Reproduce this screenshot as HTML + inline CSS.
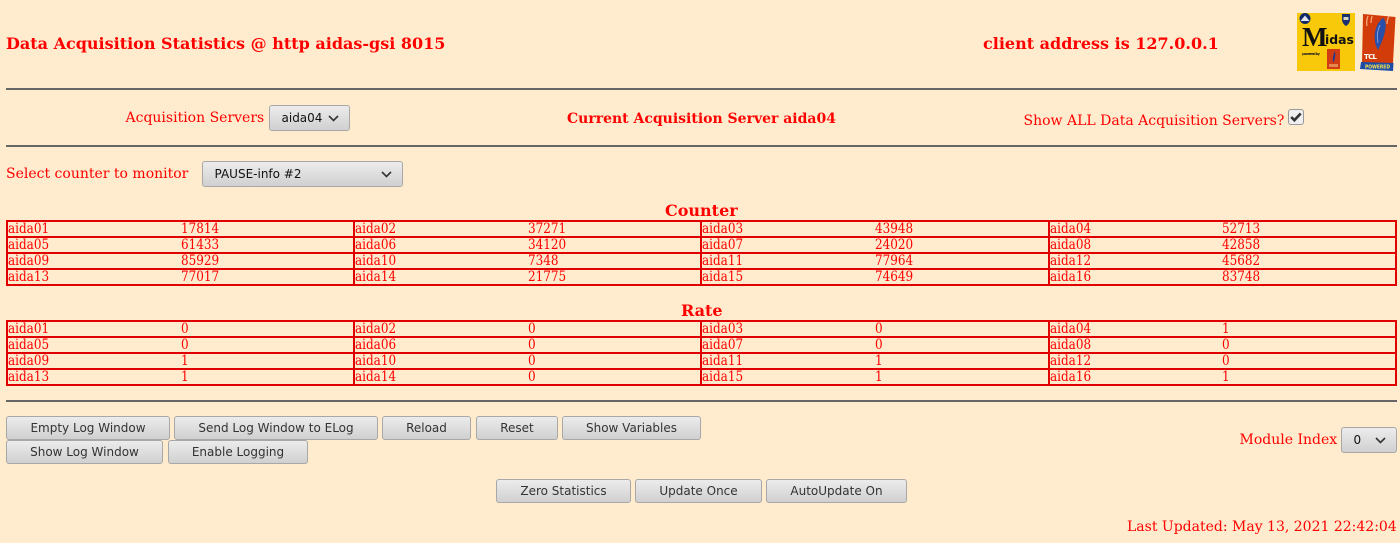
<!DOCTYPE html>
<html><head><meta charset="utf-8">
<style>
html,body{margin:0;padding:0;width:1400px;height:543px;overflow:hidden;background:#ffebcd;}
body{position:relative;font-family:"DejaVu Serif",serif;color:#f00;}
.t{position:absolute;white-space:nowrap;line-height:20px;}
.b{font-weight:bold;}
.hr{position:absolute;left:6px;width:1391px;height:2px;background:#666;}
.btn,.sel{position:absolute;box-sizing:border-box;height:24px;border:1px solid #a8a8a8;border-radius:3px;background:linear-gradient(#ececec,#d0d0d0);font:12px/22px "DejaVu Sans",sans-serif;color:#333;text-align:center;white-space:nowrap;}
.sel{height:26px;line-height:24px;color:#111;text-align:left;padding-left:11.5px;}
.sel svg{position:absolute;top:9px;}
.grid{position:absolute;left:6px;width:1391px;height:66px;}
.ln{position:absolute;background:#e00000;}
.c{position:absolute;font-size:12px;line-height:14px;white-space:nowrap;transform:scaleY(1.13);transform-origin:0 11px;}
</style></head>
<body>
<div class="t b" style="left:6px;top:34px;font-size:16px">Data Acquisition Statistics @ http aidas-gsi 8015</div>
<div class="t b" style="left:983px;top:34px;font-size:16px">client address is 127.0.0.1</div>

<svg style="position:absolute;left:1297px;top:13px;filter:blur(.35px)" width="58" height="58" viewBox="0 0 58 58">
<rect width="58" height="58" fill="#f8c80a"/>
<circle cx="8" cy="5.500" r="5.500" fill="#0f2a66"/><path d="M3.500 8L8 2.500l4.500 5.500z" fill="#dfe6f2"/>
<path d="M45 1h8v6q-.5 4-4 6Q45.500 11 45 7z" fill="#1a2f70"/><rect x="46.500" y="4" width="5" height="3" fill="#d6d6c0"/>
<text x="5" y="33" font-family="Liberation Serif,serif" font-weight="bold" font-size="27" fill="#111">M</text>
<text x="28" y="31" font-family="DejaVu Sans,sans-serif" font-weight="bold" font-size="12.400" fill="#111">idas</text>
<text x="5" y="42" font-family="DejaVu Sans,sans-serif" font-weight="bold" font-size="3.600" fill="#222" textLength="18">powered by</text>
<rect x="30" y="36" width="13" height="20" fill="#d23c12"/><path d="M38 38q1 5-1.500 12q-2-5 1.500-12z" fill="#223a90"/><rect x="32" y="51" width="9" height="3" fill="#e88a50"/>
</svg>
<svg style="position:absolute;left:1360px;top:13px;filter:blur(.35px)" width="37" height="58" viewBox="0 0 37 58">
<path d="M3 1L35.500 4 33 50H2z" fill="#d23c0a"/>
<path d="M1 49L33.500 50 33 58 0 56z" fill="#1a4ca8"/>
<path d="M23 5C28 9 26 21 18 37C12 27 14 12 23 5z" fill="#2a4fa8"/>
<path d="M20 12C17 18 17 25 18 30" stroke="#7aa0e0" stroke-width="1" fill="none"/>
<path d="M8 3q-2 5-1 10M29 3q-2 4-2 8M12 3q-1 4-1 7" stroke="#f5a878" stroke-width="1.300" fill="none"/>
<text x="4" y="46" font-family="DejaVu Sans,sans-serif" font-weight="bold" font-size="7" fill="#fff" textLength="13">TCL</text>
<text x="5" y="55.500" font-family="DejaVu Sans,sans-serif" font-weight="bold" font-size="5.500" fill="#ffe24a" textLength="25" lengthAdjust="spacingAndGlyphs">POWERED</text>
</svg>

<div class="hr" style="top:88px"></div>
<div class="t" style="left:125.500px;top:108px;font-size:14px">Acquisition Servers</div>
<div class="sel" style="left:269px;top:105px;width:81px">aida04<svg style="left:58px" width="11" height="7" viewBox="0 0 11 7"><path d="M1 1l4.500 4.500L10 1" fill="none" stroke="#333" stroke-width="1.600"/></svg></div>
<div class="t b" style="left:567px;top:109px;font-size:14px">Current Acquisition Server aida04</div>
<div class="t" style="left:1023.500px;top:111px;font-size:14px">Show ALL Data Acquisition Servers?</div>
<svg style="position:absolute;left:1288px;top:109px" width="16" height="16" viewBox="0 0 16 16"><rect x=".5" y=".5" width="15" height="15" rx="2.500" fill="#efefef" stroke="#999"/><path d="M3.200 8l3.200 3.200 6.300-6.700" fill="none" stroke="#333" stroke-width="2.600"/></svg>
<div class="hr" style="top:145px"></div>

<div class="t" style="left:6px;top:164px;font-size:14px">Select counter to monitor</div>
<div class="sel" style="left:202px;top:161px;width:201px">PAUSE-info #2<svg style="left:178px" width="11" height="7" viewBox="0 0 11 7"><path d="M1 1l4.500 4.500L10 1" fill="none" stroke="#333" stroke-width="1.600"/></svg></div>

<div class="t b" style="left:665px;top:201px;font-size:16px">Counter</div>
<div class="grid" style="top:220px">
<div class="ln" style="left:0;top:0;width:1391px;height:2px"></div>
<div class="ln" style="left:0;top:16px;width:1391px;height:2px"></div>
<div class="ln" style="left:0;top:32px;width:1391px;height:2px"></div>
<div class="ln" style="left:0;top:48px;width:1391px;height:2px"></div>
<div class="ln" style="left:0;top:64px;width:1391px;height:2px"></div>
<div class="ln" style="left:0;top:0;width:2px;height:66px"></div>
<div class="ln" style="left:347px;top:0;width:2px;height:66px"></div>
<div class="ln" style="left:694px;top:0;width:2px;height:66px"></div>
<div class="ln" style="left:1042px;top:0;width:2px;height:66px"></div>
<div class="ln" style="left:1389px;top:0;width:2px;height:66px"></div>
<div class="c" style="left:2px;top:2px">aida01</div><div class="c" style="left:175px;top:2px">17814</div><div class="c" style="left:349px;top:2px">aida02</div><div class="c" style="left:522px;top:2px">37271</div><div class="c" style="left:696px;top:2px">aida03</div><div class="c" style="left:869px;top:2px">43948</div><div class="c" style="left:1044px;top:2px">aida04</div><div class="c" style="left:1216px;top:2px">52713</div>
<div class="c" style="left:2px;top:18px">aida05</div><div class="c" style="left:175px;top:18px">61433</div><div class="c" style="left:349px;top:18px">aida06</div><div class="c" style="left:522px;top:18px">34120</div><div class="c" style="left:696px;top:18px">aida07</div><div class="c" style="left:869px;top:18px">24020</div><div class="c" style="left:1044px;top:18px">aida08</div><div class="c" style="left:1216px;top:18px">42858</div>
<div class="c" style="left:2px;top:34px">aida09</div><div class="c" style="left:175px;top:34px">85929</div><div class="c" style="left:349px;top:34px">aida10</div><div class="c" style="left:522px;top:34px">7348</div><div class="c" style="left:696px;top:34px">aida11</div><div class="c" style="left:869px;top:34px">77964</div><div class="c" style="left:1044px;top:34px">aida12</div><div class="c" style="left:1216px;top:34px">45682</div>
<div class="c" style="left:2px;top:50px">aida13</div><div class="c" style="left:175px;top:50px">77017</div><div class="c" style="left:349px;top:50px">aida14</div><div class="c" style="left:522px;top:50px">21775</div><div class="c" style="left:696px;top:50px">aida15</div><div class="c" style="left:869px;top:50px">74649</div><div class="c" style="left:1044px;top:50px">aida16</div><div class="c" style="left:1216px;top:50px">83748</div>
</div>

<div class="t b" style="left:681px;top:301px;font-size:16px">Rate</div>
<div class="grid" style="top:320px">
<div class="ln" style="left:0;top:0;width:1391px;height:2px"></div>
<div class="ln" style="left:0;top:16px;width:1391px;height:2px"></div>
<div class="ln" style="left:0;top:32px;width:1391px;height:2px"></div>
<div class="ln" style="left:0;top:48px;width:1391px;height:2px"></div>
<div class="ln" style="left:0;top:64px;width:1391px;height:2px"></div>
<div class="ln" style="left:0;top:0;width:2px;height:66px"></div>
<div class="ln" style="left:347px;top:0;width:2px;height:66px"></div>
<div class="ln" style="left:694px;top:0;width:2px;height:66px"></div>
<div class="ln" style="left:1042px;top:0;width:2px;height:66px"></div>
<div class="ln" style="left:1389px;top:0;width:2px;height:66px"></div>
<div class="c" style="left:2px;top:2px">aida01</div><div class="c" style="left:175px;top:2px">0</div><div class="c" style="left:349px;top:2px">aida02</div><div class="c" style="left:522px;top:2px">0</div><div class="c" style="left:696px;top:2px">aida03</div><div class="c" style="left:869px;top:2px">0</div><div class="c" style="left:1044px;top:2px">aida04</div><div class="c" style="left:1216px;top:2px">1</div>
<div class="c" style="left:2px;top:18px">aida05</div><div class="c" style="left:175px;top:18px">0</div><div class="c" style="left:349px;top:18px">aida06</div><div class="c" style="left:522px;top:18px">0</div><div class="c" style="left:696px;top:18px">aida07</div><div class="c" style="left:869px;top:18px">0</div><div class="c" style="left:1044px;top:18px">aida08</div><div class="c" style="left:1216px;top:18px">0</div>
<div class="c" style="left:2px;top:34px">aida09</div><div class="c" style="left:175px;top:34px">1</div><div class="c" style="left:349px;top:34px">aida10</div><div class="c" style="left:522px;top:34px">0</div><div class="c" style="left:696px;top:34px">aida11</div><div class="c" style="left:869px;top:34px">1</div><div class="c" style="left:1044px;top:34px">aida12</div><div class="c" style="left:1216px;top:34px">0</div>
<div class="c" style="left:2px;top:50px">aida13</div><div class="c" style="left:175px;top:50px">1</div><div class="c" style="left:349px;top:50px">aida14</div><div class="c" style="left:522px;top:50px">0</div><div class="c" style="left:696px;top:50px">aida15</div><div class="c" style="left:869px;top:50px">1</div><div class="c" style="left:1044px;top:50px">aida16</div><div class="c" style="left:1216px;top:50px">1</div>
</div>

<div class="hr" style="top:400px"></div>
<div class="btn" style="left:6px;top:416px;width:164px">Empty Log Window</div>
<div class="btn" style="left:174px;top:416px;width:204px">Send Log Window to ELog</div>
<div class="btn" style="left:382px;top:416px;width:89px">Reload</div>
<div class="btn" style="left:476px;top:416px;width:82px">Reset</div>
<div class="btn" style="left:562px;top:416px;width:139px">Show Variables</div>
<div class="btn" style="left:6px;top:440px;width:157px">Show Log Window</div>
<div class="btn" style="left:168px;top:440px;width:140px">Enable Logging</div>
<div class="t" style="left:1239.500px;top:430px;font-size:14px">Module Index</div>
<div class="sel" style="left:1341px;top:427px;width:56px">0<svg style="left:33px" width="11" height="7" viewBox="0 0 11 7"><path d="M1 1l4.500 4.500L10 1" fill="none" stroke="#333" stroke-width="1.600"/></svg></div>
<div class="btn" style="left:496px;top:479px;width:135px">Zero Statistics</div>
<div class="btn" style="left:635px;top:479px;width:127px">Update Once</div>
<div class="btn" style="left:766px;top:479px;width:141px">AutoUpdate On</div>
<div class="t" style="left:1127px;top:517px;font-size:14px">Last Updated: May 13, 2021 22:42:04</div>
</body></html>
